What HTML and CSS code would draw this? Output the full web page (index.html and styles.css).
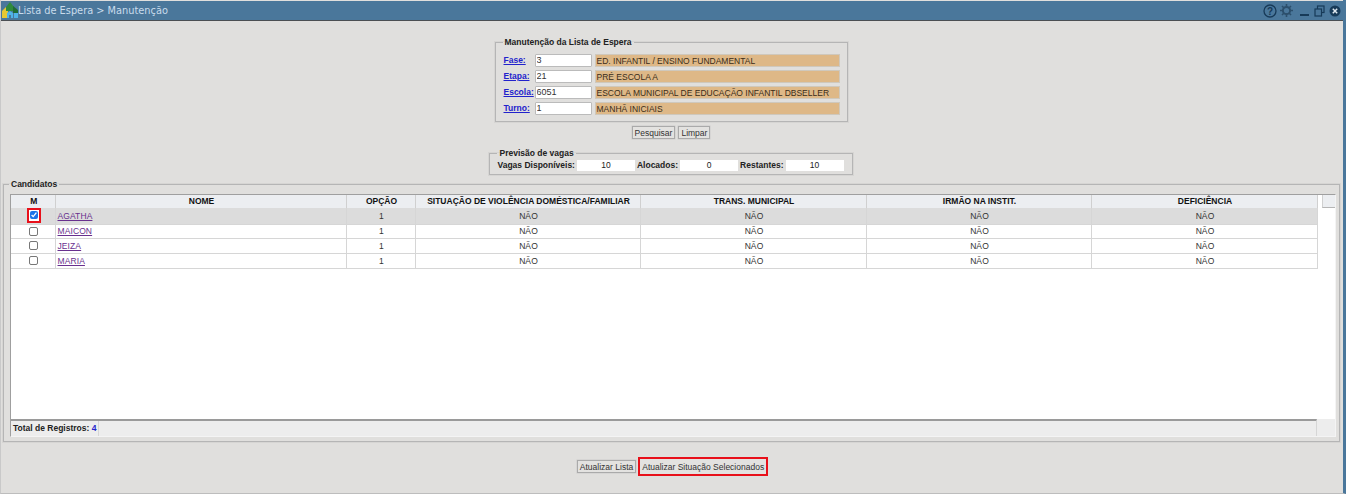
FILE: index.html
```html
<!DOCTYPE html>
<html>
	<head>
		<meta charset="utf-8">
		<title>Lista de Espera</title>
		<link rel="stylesheet" href="styles.css">
	</head>
	<body>
		<div class="window">
			<div class="titlebar">
				<svg class="logo" width="17" height="17" viewBox="0 0 17 17">
					<path d="M0 16V9l4-4 2 2v9z" fill="#e6c832"/>
					<path d="M4 5l4-5 4 5v4H4z" fill="#2f8a3c"/>
					<path d="M11 4l5 4v3h-5z" fill="#1f6b34"/>
					<path d="M5 16v-5l3-2 3 2v5h-2v-3H7v3z" fill="#4fb3e8"/>
					<path d="M12 16v-5h4v5z" fill="#4fb3e8"/>
				</svg>
				<span class="title">Lista de Espera &gt; Manutenção</span>
				<div class="tools">
					<svg class="ic-help" width="14" height="14" viewBox="0 0 14 14">
						<circle cx="7" cy="7" r="6" fill="none" stroke="#173a58" stroke-width="1.3"/>
						<text x="7" y="10.5" text-anchor="middle" class="qmark">?</text>
					</svg>
					<svg class="ic-gear" width="13" height="13" viewBox="0 0 13 13">
						<circle cx="6.5" cy="6.5" r="3.6" fill="none" stroke="#2c4f6c" stroke-width="2"/>
						<path d="M6.5 0v3M6.5 10v3M0 6.5h3M10 6.5h3M2 2l2 2M9 9l2 2M2 11l2-2M9 4l2-2" stroke="#2c4f6c" stroke-width="1.6"/>
					</svg>
					<svg width="11" height="13" viewBox="0 0 11 13">
						<rect x="1" y="10" width="9" height="2" fill="#173a58"/>
					</svg>
					<svg width="11" height="12" viewBox="0 0 11 12">
						<rect x="3.5" y="1" width="6.5" height="6.5" fill="none" stroke="#173a58" stroke-width="1.2"/>
						<rect x="1" y="4" width="6.5" height="7" fill="#4a779b" stroke="#173a58" stroke-width="1.2"/>
					</svg>
					<svg width="12" height="12" viewBox="0 0 12 12">
						<circle cx="6" cy="6" r="5.5" fill="#173a58"/>
						<path d="M3.8 3.8l4.4 4.4M8.2 3.8l-4.4 4.4" stroke="#dfe8ef" stroke-width="1.5"/>
					</svg>
				</div>
			</div>

			<div class="content">
				<fieldset class="box box-main">
					<legend>Manutenção da Lista de Espera</legend>
					<div class="form-row">
						<a class="lbl" href="#">Fase:</a>
						<input class="code" type="text" value="3">
						<span class="desc">ED. INFANTIL / ENSINO FUNDAMENTAL</span>
					</div>
					<div class="form-row">
						<a class="lbl" href="#">Etapa:</a>
						<input class="code" type="text" value="21">
						<span class="desc">PRÉ ESCOLA A</span>
					</div>
					<div class="form-row">
						<a class="lbl" href="#">Escola:</a>
						<input class="code" type="text" value="6051">
						<span class="desc">ESCOLA MUNICIPAL DE EDUCAÇÃO INFANTIL DBSELLER</span>
					</div>
					<div class="form-row">
						<a class="lbl" href="#">Turno:</a>
						<input class="code" type="text" value="1">
						<span class="desc">MANHÃ INICIAIS</span>
					</div>
				</fieldset>

				<div class="actions actions-top">
					<button class="btn">Pesquisar</button>
					<button class="btn">Limpar</button>
				</div>

				<fieldset class="box box-vagas">
					<legend>Previsão de vagas</legend>
					<div class="vagas">
						<b>Vagas Disponíveis:</b>
						<span class="num">10</span>
						<b>Alocados:</b>
						<span class="num">0</span>
						<b>Restantes:</b>
						<span class="num">10</span>
					</div>
				</fieldset>

				<fieldset class="box box-cand">
					<legend>Candidatos</legend>
					<div class="grid">
						<div class="grid-head">
							<table>
								<colgroup>
									<col class="c-m"><col class="c-nome"><col class="c-op"><col class="c-sit"><col class="c-tr"><col class="c-ir"><col class="c-de">
								</colgroup>
								<tr>
									<th>M</th>
									<th>NOME</th>
									<th>OPÇÃO</th>
									<th>SITUAÇÃO DE VIOLÊNCIA DOMÉSTICA/FAMILIAR</th>
									<th>TRANS. MUNICIPAL</th>
									<th>IRMÃO NA INSTIT.</th>
									<th>DEFICIÊNCIA</th>
								</tr>
							</table>
							<div class="head-end"></div>
						</div>
						<div class="grid-body">
							<table>
								<colgroup>
									<col class="c-m"><col class="c-nome"><col class="c-op"><col class="c-sit"><col class="c-tr"><col class="c-ir"><col class="c-de">
								</colgroup>
								<tr class="selected">
									<td><span class="mark"><input type="checkbox" checked></span></td>
									<td class="nome"><a href="#">AGATHA</a></td>
									<td>1</td><td>NÃO</td><td>NÃO</td><td>NÃO</td><td>NÃO</td>
								</tr>
								<tr class="short">
									<td><input type="checkbox"></td>
									<td class="nome"><a href="#">MAICON</a></td>
									<td>1</td><td>NÃO</td><td>NÃO</td><td>NÃO</td><td>NÃO</td>
								</tr>
								<tr>
									<td><input type="checkbox"></td>
									<td class="nome"><a href="#">JEIZA</a></td>
									<td>1</td><td>NÃO</td><td>NÃO</td><td>NÃO</td><td>NÃO</td>
								</tr>
								<tr>
									<td><input type="checkbox"></td>
									<td class="nome"><a href="#">MARIA</a></td>
									<td>1</td><td>NÃO</td><td>NÃO</td><td>NÃO</td><td>NÃO</td>
								</tr>
							</table>
						</div>
						<div class="grid-foot">
							<div class="foot-main">
								<div class="total">Total de Registros: <span class="count">4</span></div>
							</div>
							<div class="foot-end"></div>
						</div>
					</div>
				</fieldset>

				<div class="actions actions-bottom">
					<button class="btn">Atualizar Lista</button>
					<button class="btn btn-marked">Atualizar Situação Selecionados</button>
				</div>
			</div>
		</div>
	</body>
</html>
```

FILE: styles.css
```css
* {
	margin: 0;
	padding: 0;
	box-sizing: border-box;
}
html, body {
	height: 497px;
	overflow: hidden;
	background-color: #fff;
}
body {
	font-family: "Liberation Sans", Arial, sans-serif;
	font-size: 9px;
	color: #222;
}
.window {
	width: 1346px;
	height: 494px;
	padding-top: 1px;
	border-left: 1px solid #c9c9c9;
	border-right: 3px solid #4a779b;
	border-bottom: 1px solid #bdbdbd;
	background-color: #e0dfdd;
	display: flex;
	flex-direction: column;
}
.titlebar {
	height: 20px;
	flex: none;
	display: flex;
	align-items: center;
	background-color: #4a779b;
	border-bottom: 1px solid #4b4f53;
}
.logo {
	flex: none;
	margin-left: 1px;
}
.title {
	font-family: "DejaVu Sans", sans-serif;
	font-size: 9.8px;
	color: #c9dcec;
	margin-left: -1px;
}
.tools {
	margin-left: auto;
	margin-right: 2px;
	display: flex;
	align-items: center;
	gap: 4px;
}
.ic-help {
	margin-right: -1px;
}
.ic-gear {
	margin-right: 2px;
}
.qmark {
	font-family: "Liberation Sans", sans-serif;
	font-size: 10px;
	font-weight: bold;
	fill: #173a58;
}
.content {
	flex: 1;
	padding-right: 2px;
	display: flex;
	flex-direction: column;
	align-items: center;
}
.box {
	border: 1px solid #b5b5b5;
	box-shadow: 0 0 0 1px #d6d5d3;
}
.box legend {
	font-weight: bold;
	font-size: 8.5px;
	line-height: 9px;
	margin-left: -1px;
	padding: 0 2px;
	color: #222;
}
.box-main {
	width: 353px;
	height: 84px;
	margin-top: 17px;
	padding: 5px 7px 0 8px;
}
.form-row {
	height: 16px;
	display: flex;
	align-items: center;
}
.lbl {
	width: 31px;
	font-size: 8.5px;
	font-weight: bold;
	color: #2222cc;
	white-space: nowrap;
}
.code {
	width: 57px;
	height: 13px;
	font-family: inherit;
	font-size: 9px;
	color: #333;
	padding-left: 1px;
	background-color: #fff;
	border: 1px solid #bbb;
	border-radius: 1px;
}
.desc {
	width: 245px;
	height: 13px;
	margin-left: 3px;
	padding-left: 1px;
	line-height: 12px;
	font-size: 8.5px;
	color: #3a2c18;
	background-color: #deb887;
	border: 1px solid #cfc8bc;
	white-space: nowrap;
}
.actions {
	display: flex;
	justify-content: center;
	align-items: center;
	flex: none;
}
.actions-top {
	margin-top: 4px;
	gap: 3px;
}
.btn {
	height: 13px;
	padding: 0 2px;
	font-family: inherit;
	font-size: 8.5px;
	color: #333;
	background-color: #e3e2e0;
	border: 1px solid #aaa;
	box-shadow: 0 0 0 0.5px #ccc;
	white-space: nowrap;
}
.box-vagas {
	width: 361px;
	height: 26px;
	margin-top: 10px;
	padding: 0 6px 0 7px;
}
.box-vagas legend {
	margin-left: 0;
}
.vagas {
	display: flex;
	align-items: center;
	height: 12px;
	margin-top: 1px;
	font-size: 8.5px;
	white-space: nowrap;
}
.num {
	width: 58px;
	height: 11px;
	margin: 0 2px;
	line-height: 11px;
	text-align: center;
	background-color: #fff;
}
.box-cand {
	align-self: flex-start;
	width: 1337px;
	height: 262px;
	margin: 5px 0 0 2px;
	padding: 5px 3px 0 6px;
}
.grid {
	width: 1326px;
	height: 243px;
	border: 1px solid #f4f4f4;
	border-left-color: #9f9f9f;
	border-top-color: #9f9f9f;
	background-color: #fff;
	display: flex;
	flex-direction: column;
}
.grid table {
	table-layout: fixed;
	width: 1306px;
	border-collapse: collapse;
}
.c-m { width: 44px; }
.c-nome { width: 291px; }
.c-op { width: 69px; }
.c-sit { width: 225px; }
.c-tr { width: 226px; }
.c-ir { width: 225px; }
.c-de { width: 226px; }
.grid-head {
	height: 13px;
	flex: none;
	display: flex;
	background-color: #fff;
}
.grid-head table {
	background-color: #eceef1;
}
.grid th {
	height: 13px;
	padding-left: 2px;
	font-size: 8.5px;
	color: #111;
	border-right: 1px solid #d0d0d0;
	border-bottom: 1px solid #9f9f9f;
	white-space: nowrap;
}
.head-end {
	width: 14px;
	height: 13px;
	margin-left: 4px;
	background-color: #eceef1;
	border-bottom: 1px solid #b5b5b5;
	border-left: 1px solid #d0d0d0;
}
.grid-body {
	flex: 1;
}
.grid td {
	height: 15px;
	padding-left: 2px;
	font-size: 8.5px;
	letter-spacing: 0.1px;
	text-align: center;
	color: #333;
	border-right: 1px solid #d6d6d6;
	border-bottom: 1px solid #d6d6d6;
}
.grid tr.selected td {
	height: 16px;
	background-color: #dcdcdc;
}
.grid tr.short td {
	height: 14px;
}
.grid td.nome {
	text-align: left;
	padding-left: 2px;
}
.nome a {
	color: #68308e;
}
.grid input[type=checkbox] {
	width: 9px;
	height: 9px;
	display: block;
	margin: 0 auto;
	accent-color: #1a73e8;
}
.grid input[type=checkbox]:not(:checked) {
	appearance: none;
	background-color: #fff;
	border: 1.5px solid #777;
	border-radius: 2px;
}
.mark {
	display: block;
	width: 14px;
	height: 15px;
	margin: 0 auto;
	border: 2px solid #e8101a;
	padding: 1px;
	background-color: #fff;
}
.mark input[type=checkbox] {
	width: 8px;
	height: 8px;
}
.grid-foot {
	height: 17px;
	flex: none;
	display: flex;
	align-items: stretch;
	background-color: #ededed;
}
.foot-main {
	width: 1306px;
	border-top: 2px solid #9a9a9a;
	border-right: 1px solid #d6d6d6;
}
.total {
	width: 88px;
	height: 100%;
	padding-left: 2px;
	line-height: 15px;
	font-size: 8.5px;
	font-weight: bold;
	color: #222;
	border-right: 1px solid #d6d6d6;
}
.count {
	color: #2222cc;
}
.foot-end {
	flex: 1;
}
.actions-bottom {
	margin-top: 15px;
	padding-left: 3px;
	gap: 2px;
}
.btn-marked {
	height: 19px;
	padding: 0 2px;
	border: 2px solid #e8101a;
	box-shadow: none;
}
```
